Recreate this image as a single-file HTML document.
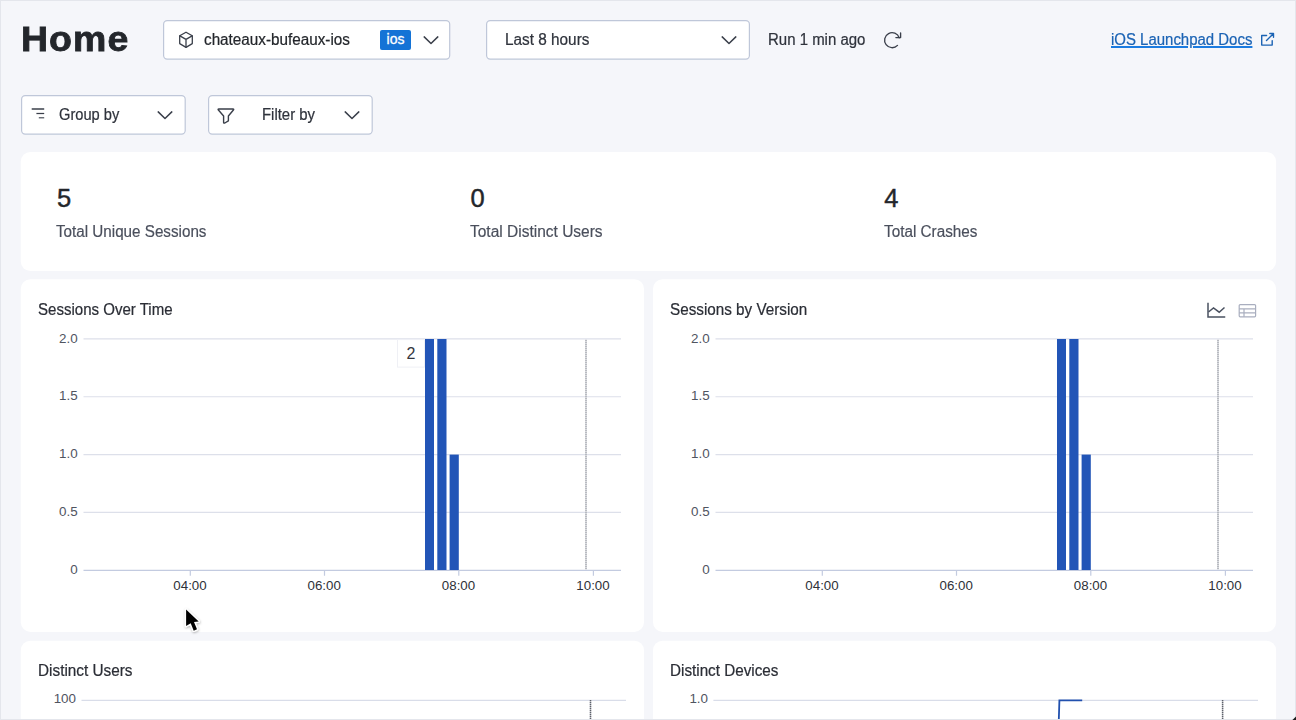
<!DOCTYPE html>
<html lang="en">
<head>
<meta charset="utf-8">
<title>Home</title>
<style>
*{box-sizing:border-box;margin:0;padding:0}
html,body{width:1296px;height:720px;overflow:hidden}
body{background:#f5f6fa;font-family:"Liberation Sans",sans-serif;color:#2f333c;position:relative}
.frame{position:absolute;left:0;top:0;width:1296px;height:720px;border:1px solid #e4e6ec;pointer-events:none;z-index:50}
.abs{position:absolute;white-space:nowrap}
h1{position:absolute;left:21px;top:19.4px;font-size:34.5px;line-height:40px;font-weight:bold;color:#23262b;letter-spacing:1px;-webkit-text-stroke:0.8px #23262b;transform:scaleX(1.085);transform-origin:0 0}
.t15{-webkit-text-stroke:0.22px currentColor;font-size:15.6px;transform-origin:0 50%;line-height:20px;color:#2f333c}
.lbl{-webkit-text-stroke:0.18px currentColor;font-size:15.6px;transform-origin:0 50%;line-height:20px;color:#4a4f5c}
.num{font-size:25.5px;line-height:30px;color:#23262b;-webkit-text-stroke:0.45px #23262b}
.ctitle{-webkit-text-stroke:0.22px currentColor;font-size:15.6px;transform-origin:0 50%;line-height:20px;color:#2b2e36}
svg{position:absolute;overflow:visible}
svg text{font-family:"Liberation Sans",sans-serif}
</style>
</head>
<body>
<div class="frame"></div>

<svg style="left:0;top:0" width="1296" height="720" viewBox="0 0 1296 720">
<g fill="#fff">
  <rect x="20.8" y="151.9" width="1255.3" height="119.2" rx="9.6"/>
  <rect x="20.8" y="279.2" width="623.2" height="352.7" rx="9.6"/>
  <rect x="653" y="279.2" width="623.1" height="352.7" rx="9.6"/>
  <rect x="20.8" y="640.8" width="623.2" height="100" rx="9.6"/>
  <rect x="653" y="640.8" width="623.1" height="100" rx="9.6"/>
</g>
<g fill="#fff" stroke="#bfc7d9" stroke-width="1.2">
  <rect x="163.6" y="20.6" width="286.1" height="38.6" rx="3.6"/>
  <rect x="486.6" y="20.6" width="262.800" height="38.6" rx="3.6"/>
  <rect x="21.6" y="95.6" width="163.6" height="38.6" rx="3.6"/>
  <rect x="208.6" y="95.6" width="163.6" height="38.6" rx="3.6"/>
</g>
</svg>
<h1>Home</h1>

<!-- project select -->
<svg style="left:177.500px;top:31px" width="16" height="18" viewBox="0 0 16 18" fill="none" stroke="#3a3f4a" stroke-width="1.3" stroke-linejoin="round" stroke-linecap="round"><path d="M8 1.2 L14.3 4.7 V12.6 L8 16.4 L1.7 12.6 V4.7 Z"/><path d="M1.9 4.9 L8 8.4 L14.1 4.9 M8 8.4 V16.2"/></svg>
<div class="abs t15" style="left:204px;top:30px;color:#23262b;transform:scaleX(0.9790)">chateaux-bufeaux-ios</div>
<div class="abs" style="left:380px;top:30px;width:31px;height:20px;background:#1473d6;border-radius:2px;color:#fff;font-size:14px;line-height:19px;text-align:center;-webkit-text-stroke:0.3px #fff">ios</div>
<svg style="left:423px;top:35px" width="16" height="10" viewBox="0 0 16 10" fill="none" stroke="#3a3f4a" stroke-width="1.5" stroke-linecap="round" stroke-linejoin="round"><path d="M1.2 1.9 L8 8.5 L14.8 1.9"/></svg>

<!-- time select -->
<div class="abs t15" style="left:504.6px;top:30px;transform:scaleX(0.9837)">Last 8 hours</div>
<svg style="left:721px;top:35px" width="16" height="10" viewBox="0 0 16 10" fill="none" stroke="#3a3f4a" stroke-width="1.5" stroke-linecap="round" stroke-linejoin="round"><path d="M1.2 1.9 L8 8.5 L14.8 1.9"/></svg>

<div class="abs t15" style="left:767.5px;top:30px;transform:scaleX(0.9605)">Run 1 min ago</div>
<svg style="left:0;top:0" width="1296" height="720" viewBox="0 0 1296 720" fill="none" stroke="#3a3f4a" stroke-width="1.35" stroke-linecap="round" stroke-linejoin="round"><path d="M897.5 45.4 A7.5 7.5 0 1 1 899.2 37.8"/><path d="M900.6 32.9 V37.6 H895.9"/></svg>

<div class="abs t15" style="left:1111px;top:30px;color:#1b63b4;text-decoration:underline;text-decoration-color:#1b7be0;text-decoration-thickness:1.5px;text-underline-offset:0.8px;transform:scaleX(0.9595)">iOS Launchpad Docs</div>
<svg style="left:0;top:0" width="1296" height="720" viewBox="0 0 1296 720" fill="none" stroke="#1b63b4" stroke-width="1.4" stroke-linecap="round" stroke-linejoin="round"><path d="M1266.600 35.5 H1261.7 V45.1 H1272.2 V40.6"/><path d="M1266.5 40.5 L1273.3 33.7 M1269.8 33.5 H1273.5 V37.2"/></svg>

<!-- group / filter -->
<svg style="left:31px;top:108px" width="14" height="12" viewBox="0 0 14 12" fill="none" stroke="#3a3f4a" stroke-linecap="butt"><path d="M0.7 1 H13.2" stroke-width="1.5"/><path d="M5.4 5.5 H13.2" stroke-width="1.25"/><path d="M7.8 9.800 H13.2" stroke-width="1.1"/></svg>
<div class="abs t15" style="left:59px;top:105px;transform:scaleX(0.9397)">Group by</div>
<svg style="left:157px;top:110px" width="16" height="10" viewBox="0 0 16 10" fill="none" stroke="#3a3f4a" stroke-width="1.5" stroke-linecap="round" stroke-linejoin="round"><path d="M1.2 1.9 L8 8.5 L14.8 1.9"/></svg>

<svg style="left:217px;top:106.6px" width="18" height="18" viewBox="0 0 18 18" fill="none" stroke="#3a3f4a" stroke-width="1.4" stroke-linecap="round" stroke-linejoin="round"><path d="M1.8 2 H16 Q17.2 2 16.4 3 L11.4 9 V13.8 L7.8 16 Q6.6 16.5 6.6 15.4 V9 L1.4 3 Q0.6 2 1.800 2 Z"/></svg>
<div class="abs t15" style="left:262px;top:105px;transform:scaleX(0.9561)">Filter by</div>
<svg style="left:344px;top:110px" width="16" height="10" viewBox="0 0 16 10" fill="none" stroke="#3a3f4a" stroke-width="1.5" stroke-linecap="round" stroke-linejoin="round"><path d="M1.2 1.9 L8 8.5 L14.8 1.9"/></svg>

<!-- stats -->
<div class="abs num" style="left:56.9px;top:183.2px">5</div>
<div class="abs lbl" style="left:56px;top:221.6px;transform:scaleX(0.9752)">Total Unique Sessions</div>
<div class="abs num" style="left:470.5px;top:183.2px">0</div>
<div class="abs lbl" style="left:470px;top:221.6px;transform:scaleX(0.9937)">Total Distinct Users</div>
<div class="abs num" style="left:884.2px;top:183.2px">4</div>
<div class="abs lbl" style="left:884px;top:221.6px;transform:scaleX(0.9804)">Total Crashes</div>

<!-- chart cards -->

<div class="abs ctitle" style="left:38.2px;top:300.3px;transform:scaleX(0.9644)">Sessions Over Time</div>
<div class="abs ctitle" style="left:670px;top:300.3px;transform:scaleX(0.9772)">Sessions by Version</div>
<div class="abs ctitle" style="left:38.2px;top:661.2px;transform:scaleX(0.9824)">Distinct Users</div>
<div class="abs ctitle" style="left:670.2px;top:661.2px;transform:scaleX(0.9777)">Distinct Devices</div>

<!-- chart 1 -->
<svg id="c1" style="left:0;top:0" width="1296" height="720" viewBox="0 0 1296 720">
<defs><filter id="cs" x="-50%" y="-50%" width="200%" height="200%"><feDropShadow dx="0.4" dy="1" stdDeviation="0.9" flood-color="#000" flood-opacity="0.3"/></filter></defs>
<g>
  <g stroke="#dde0ea" stroke-width="1.2">
    <path d="M83.5 338.9 H621 M83.5 396.75 H621 M83.5 454.6 H621 M83.5 512.45 H621"/>
  </g>
  <path d="M83.5 570.3 H621" stroke="#c3cbe0" stroke-width="1.2"/>
  <path d="M190.3 570.8 V575.8 M324.5 570.8 V575.8 M458.800 570.8 V575.8 M593.4 570.8 V575.8" stroke="#c3cbe0" stroke-width="1.2"/>
  <path d="M586 339.5 V569.6" stroke="#d0d2d7" stroke-width="1.6"/><path d="M586 340 V569.6" stroke="#aeb1b8" stroke-width="1.5" stroke-dasharray="1 1"/>
  <g fill="#2255b7">
    <rect x="425" y="339" width="9" height="231"/>
    <rect x="437.3" y="339" width="9.200" height="231"/>
    <rect x="449.6" y="454.6" width="9.2" height="115.4"/>
  </g>
  <g font-size="13.4" fill="#50545f" text-anchor="end">
    <text x="77.6" y="342.6">2.0</text>
    <text x="77.6" y="400.45">1.5</text>
    <text x="77.6" y="458.3">1.0</text>
    <text x="77.6" y="516.15">0.5</text>
    <text x="77.6" y="574">0</text>
  </g>
  <g font-size="13.3" fill="#2e3138" text-anchor="middle">
    <text x="190" y="589.9">04:00</text>
    <text x="324.2" y="589.9">06:00</text>
    <text x="458.5" y="589.9">08:00</text>
    <text x="593" y="589.9">10:00</text>
  </g>
</g>
<g transform="translate(632 0)">
  <g stroke="#dde0ea" stroke-width="1.2">
    <path d="M83.5 338.9 H621 M83.5 396.75 H621 M83.5 454.6 H621 M83.5 512.45 H621"/>
  </g>
  <path d="M83.5 570.3 H621" stroke="#c3cbe0" stroke-width="1.2"/>
  <path d="M190.3 570.8 V575.8 M324.5 570.8 V575.8 M458.800 570.8 V575.8 M593.4 570.8 V575.8" stroke="#c3cbe0" stroke-width="1.2"/>
  <path d="M586 339.5 V569.6" stroke="#d0d2d7" stroke-width="1.6"/><path d="M586 340 V569.6" stroke="#aeb1b8" stroke-width="1.5" stroke-dasharray="1 1"/>
  <g fill="#2255b7">
    <rect x="425" y="339" width="9" height="231"/>
    <rect x="437.3" y="339" width="9.200" height="231"/>
    <rect x="449.6" y="454.6" width="9.2" height="115.4"/>
  </g>
  <g font-size="13.4" fill="#50545f" text-anchor="end">
    <text x="77.6" y="342.6">2.0</text>
    <text x="77.6" y="400.45">1.5</text>
    <text x="77.6" y="458.3">1.0</text>
    <text x="77.6" y="516.15">0.5</text>
    <text x="77.6" y="574">0</text>
  </g>
  <g font-size="13.3" fill="#2e3138" text-anchor="middle">
    <text x="190" y="589.9">04:00</text>
    <text x="324.2" y="589.9">06:00</text>
    <text x="458.5" y="589.9">08:00</text>
    <text x="593" y="589.9">10:00</text>
  </g>
</g>
<!-- tooltip -->
<rect x="397.5" y="339.6" width="27" height="27.5" fill="#fff" stroke="#eff0f5"/>
<text x="411" y="358.8" font-size="16" fill="#33363e" text-anchor="middle">2</text>

<!-- icons right -->
<g fill="none" stroke="#4a5160" stroke-width="1.5" stroke-linecap="square" stroke-linejoin="miter">
  <path d="M1208 303.5 V317 H1224.5"/>
  <path d="M1208.5 312 L1213.5 308 L1219.2 312.2 L1224.5 307.5" stroke-linecap="butt"/>
</g>
<g fill="none" stroke="#a9aebf" stroke-width="1.2">
  <rect x="1239.2" y="304.6" width="16.4" height="12.2" rx="1"/>
  <path d="M1239.2 308.8 H1255.6 M1239.2 312.8 H1255.6 M1244 308.8 V316.8"/>
</g>

<!-- bottom charts -->
<path d="M81.5 700.3 H626" stroke="#d9dde9" stroke-width="1.2"/>
<path d="M590.5 700 V720" stroke="#b9bbc0" stroke-width="1.5"/><path d="M590.5 700 V720" stroke="#5e626b" stroke-width="1.4" stroke-dasharray="1 1"/>
<text x="76" y="703.4" font-size="13.4" fill="#50545f" text-anchor="end">100</text>
<path d="M713.4 700.3 H1258" stroke="#d9dde9" stroke-width="1.2"/>
<path d="M1222.600 700 V720" stroke="#b9bbc0" stroke-width="1.5"/><path d="M1222.600 700 V720" stroke="#5e626b" stroke-width="1.4" stroke-dasharray="1 1"/>
<text x="708" y="703.4" font-size="13.4" fill="#50545f" text-anchor="end">1.0</text>
<path d="M1058.800 720 L1059.400 700.4 H1082.200" stroke="#2150ae" stroke-width="1.8" fill="none"/>

<!-- cursor -->
<g filter="url(#cs)">
<path d="M186.1 609.6 V625.9 L190.7 623.2 L193.7 630.7 L197 629.3 L194 622.1 L198.700 621.500 Z" fill="#050505" stroke="#fff" stroke-width="2.6" stroke-linejoin="round" paint-order="stroke"/>
</g>
</svg>
<svg style="left:1290px;top:714px;z-index:60" width="6" height="6" viewBox="0 0 6 6"><path d="M6 2.4 L2.400 6 H6 Z" fill="#1c1c1c"/></svg>
</body>
</html>
